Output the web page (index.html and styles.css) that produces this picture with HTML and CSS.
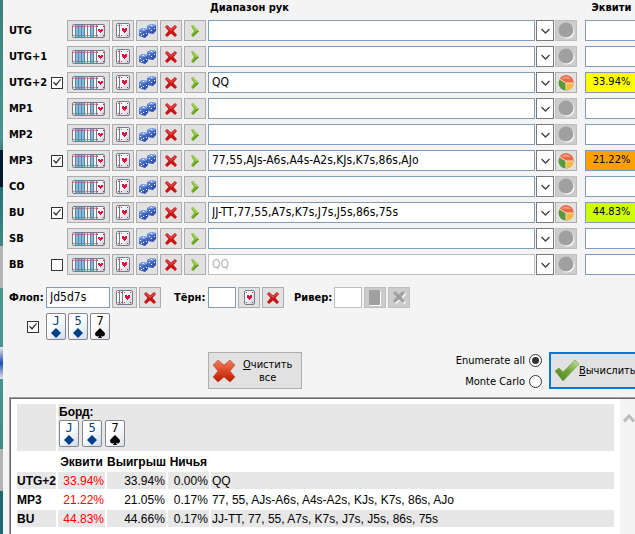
FILE: index.html
```html
<!DOCTYPE html>
<html lang="ru">
<head>
  <meta charset="UTF-8">
  <meta name="viewport" content="width=device-width, initial-scale=1">
  <title>Эквити</title>
  <link rel="stylesheet" href="styles.css">
</head>
<body>

  <!-- icons -->
  <svg class="sprite" aria-hidden="true">
    <defs>
      <linearGradient id="gCard" x1="0" y1="0" x2="1" y2="1"><stop offset=".3" stop-color="#fff"/><stop offset="1" stop-color="#c3cbd6"/></linearGradient>
      <linearGradient id="gRed" x1="0" y1="0" x2="0" y2="1"><stop offset="0" stop-color="#f0805c"/><stop offset=".5" stop-color="#d84a25"/><stop offset="1" stop-color="#b81800"/></linearGradient>
      <linearGradient id="gGreen" x1="1" y1="0" x2="0" y2="1"><stop offset="0" stop-color="#c4e59a"/><stop offset=".5" stop-color="#6fa33a"/><stop offset="1" stop-color="#4e861b"/></linearGradient>
      <linearGradient id="gDice" x1="0" y1="0" x2="1" y2="1"><stop offset="0" stop-color="#6f97ea"/><stop offset="1" stop-color="#1a3a9a"/></linearGradient>

      <symbol id="back" viewBox="0 0 9 14"><rect x=".5" y=".5" width="8" height="13" rx="1.5" fill="#f2f3f6" stroke="#777a88"/><path d="M2 2v1M2 11v1" stroke="#d42a4a"/></symbol>
      <symbol id="blue" viewBox="0 0 9 14"><rect x=".5" y=".5" width="8" height="13" rx="1.5" fill="#72c2ea" stroke="#777a88"/><path d="M2 2v1M2 11v1" stroke="#c02a50"/></symbol>
      <symbol id="heart" viewBox="0 0 9 14"><rect x=".5" y=".5" width="8" height="13" rx="1.5" fill="url(#gCard)" stroke="#777a88"/><path d="M2 5h2v1h1V5h2v2H6v1H5v1H4V8H3V7H2z" fill="#e0103a"/><path d="M1 2h1v1H1zM7 2h1v1H7zM1 11h1v1H1zM7 11h1v1H7z" fill="#d42a4a"/></symbol>
      <symbol id="face" viewBox="0 0 11 15"><rect x=".5" y=".5" width="10" height="14" rx="1.5" fill="url(#gCard)" stroke="#777a88"/><path d="M3 5h2v1h1V5h2v3H7v1H6v1H5V9H4V8H3z" fill="#e0103a"/><path d="M2 2h1v1H2zM8 2h1v1H8zM2 12h1v1H2zM8 12h1v1H8z" fill="#d42a4a"/></symbol>

      <symbol id="i-range" viewBox="0 0 33 14">
        <use href="#back" width="9" height="14"/><use href="#blue" x="3" width="9" height="14"/><use href="#blue" x="6" width="9" height="14"/><use href="#blue" x="9" width="9" height="14"/><use href="#back" x="12" width="9" height="14"/><use href="#back" x="15" width="9" height="14"/><use href="#blue" x="18" width="9" height="14"/><use href="#back" x="21" width="9" height="14"/><use href="#heart" x="24" width="9" height="14"/>
      </symbol>
      <symbol id="i-hand" viewBox="0 0 14 15"><use href="#face" width="11" height="15"/><use href="#face" x="3" width="11" height="15"/></symbol>
      <symbol id="i-flop" viewBox="0 0 17 15"><use href="#face" width="11" height="15"/><use href="#face" x="3" width="11" height="15"/><use href="#face" x="6" width="11" height="15"/></symbol>
      <symbol id="i-card" viewBox="0 0 11 15"><use href="#face" width="11" height="15"/></symbol>
      <symbol id="i-card-off" viewBox="0 0 12 16"><rect x="1" y="1" width="11" height="15" rx="1" fill="#fff"/><rect width="11" height="15" rx="1" fill="#a0a0a0"/></symbol>
      <symbol id="i-dice" viewBox="0 0 17 14">
        <path d="M8 2l4-2 5 1v6l-3 3-6-1z" fill="url(#gDice)"/><path d="M8 2l4-2 5 1-3 2z" fill="#7fa2ea"/>
        <path d="M0 6l3-2 6 1v6l-3 3-6-2z" fill="url(#gDice)"/><path d="M0 6l3-2 6 1-3 2z" fill="#7fa2ea"/>
        <path d="M1 8h1v1H1zM4 10h1v1H4zM2 11h1v1H2zM7 9h1v1H7zM4 5h1v1H4zM10 4h1v1h-1zM12 6h1v1h-1zM15 4h1v1h-1zM12 1h1v1h-1z" fill="#fff"/>
      </symbol>
      <symbol id="i-x" viewBox="0 0 12 12"><path d="M2 0l4 3.500L10 0l2 2-3.500 4L12 10l-2 2-4-3.500L2 12l-2-2 3.500-4L0 2z" fill="#c81414"/><path d="M2 1l4 3.500L10 1l1 1-5 4-5-4z" fill="#e2504e"/></symbol>
      <symbol id="i-x-off" viewBox="0 0 13 13"><path d="M3 1l4 3.500L11 1l2 2-3.500 4L13 11l-2 2-4-3.500L3 13l-2-2 3.500-4L1 3z" fill="#fff"/><path d="M2 0l4 3.500L10 0l2 2-3.500 4L12 10l-2 2-4-3.500L2 12l-2-2 3.500-4L0 2z" fill="#a0a0a0"/></symbol>
      <symbol id="i-next" viewBox="0 0 8 12"><path d="M0 1l2-1 6 6-6 6-2-2 3-4z" fill="#7db829"/><path d="M1 1l1-.5L7 6H5z" fill="#a5d860"/><path d="M1 11l1 .5L8 6H6z" fill="#5c9418"/></symbol>
      <symbol id="i-down" viewBox="0 0 9 6"><path d="M.5 1l4 4 4-4" fill="none" stroke="#444" stroke-width="1.400"/></symbol>
      <symbol id="i-up" viewBox="0 0 12 9"><path d="M1 7.500l5-5.500 5 5.500" fill="none" stroke="#bdbdbd" stroke-width="3"/></symbol>
      <symbol id="i-pie" viewBox="0 0 16 16"><circle cx="8" cy="8" r="7.500" fill="#5a9a3c"/><path d="M8 8L1.500 4A7.500 7.500 0 0 1 15.500 8z" fill="#ee6a45"/><path d="M8 8h7.500A7.500 7.500 0 0 1 8.500 15.500z" fill="#fcb63c"/><path d="M8 15.500V8L1.500 4M8 8h7.500" fill="none" stroke="#fbe3c0"/><path d="M3 4a6.500 6.500 0 0 1 10 0q-5-1-10 0z" fill="#f8a184"/></symbol>
      <symbol id="i-pie-off" viewBox="0 0 17 17"><circle cx="9" cy="9" r="7.500" fill="#fff"/><circle cx="8" cy="8" r="7.500" fill="#a0a0a0"/></symbol>
      <symbol id="i-clear" viewBox="0 0 22 22"><path d="M5 0l6 5 6-5 5 5-5 6 5 6-5 5-6-5-6 5-5-5 5-6-5-6z" fill="url(#gRed)" stroke="#b03a1c" stroke-width=".5"/></symbol>
      <symbol id="i-ok" viewBox="0 0 24 21"><path d="M0 11l4-3 4 4L20 0l4 4L8 21z" fill="url(#gGreen)" stroke="#638f35" stroke-width=".5"/></symbol>
      <symbol id="i-diamond" viewBox="0 0 10 10"><path d="M5 0l5 5-5 5-5-5z" fill="#00408a"/></symbol>
      <symbol id="i-spade" viewBox="0 0 10 10"><path d="M5 0l4 4q2 2 0 4-2 1-3.500-.5L7 10H3l1.500-2.500Q3 9 1 8q-2-2 0-4z" fill="#000"/></symbol>
    </defs>
  </svg>

  <main class="app">
    <section class="players">
      <div class="head">
        <span>Диапазон рук</span>
        <span class="equity-title">Эквити</span>
      </div>
      <div id="rows"></div>
    </section>

    <section class="board">
      <label class="name" for="flop">Флоп:</label>
      <input class="field flop" id="flop" type="text" value="Jd5d7s">
      <button class="btn flop-btn" aria-label="Выбрать флоп"><svg width="17" height="15"><use href="#i-flop"/></svg></button>
      <button class="btn" aria-label="Очистить флоп"><svg width="12" height="12"><use href="#i-x"/></svg></button>
      <label class="name turn-name" for="turn">Тёрн:</label>
      <input class="field street" id="turn" type="text">
      <button class="btn" aria-label="Выбрать тёрн"><svg width="11" height="15"><use href="#i-card"/></svg></button>
      <button class="btn" aria-label="Очистить тёрн"><svg width="12" height="12"><use href="#i-x"/></svg></button>
      <label class="name river-name" for="river">Ривер:</label>
      <input class="field street" id="river" type="text" disabled>
      <button class="btn" disabled aria-label="Выбрать ривер"><svg width="12" height="16"><use href="#i-card-off"/></svg></button>
      <button class="btn" disabled aria-label="Очистить ривер"><svg width="13" height="13"><use href="#i-x-off"/></svg></button>
    </section>

    <section class="board-cards">
      <input class="check" type="checkbox" checked aria-label="Борд">
      <div class="cards">
        <span class="card blue">J<svg width="10" height="10"><use href="#i-diamond"/></svg></span>
        <span class="card blue">5<svg width="10" height="10"><use href="#i-diamond"/></svg></span>
        <span class="card">7<svg width="10" height="10"><use href="#i-spade"/></svg></span>
      </div>
    </section>

    <section class="actions">
      <button class="big-btn clear"><svg width="22" height="22"><use href="#i-clear"/></svg><span><u>О</u>чистить<br>все</span></button>
      <div class="modes">
        <label>Enumerate all <input class="radio" type="radio" name="mode" checked></label>
        <label>Monte Carlo <input class="radio" type="radio" name="mode"></label>
      </div>
      <button class="big-btn calc"><svg width="24" height="21"><use href="#i-ok"/></svg><span><u>В</u>ычислить</span></button>
    </section>

    <section class="results">
      <table>
        <tr class="odd top">
          <td></td>
          <td colspan="4">
            <b>Борд:</b>
            <div class="cards wide">
              <span class="card blue">J<svg width="10" height="10"><use href="#i-diamond"/></svg></span>
              <span class="card blue">5<svg width="10" height="10"><use href="#i-diamond"/></svg></span>
              <span class="card">7<svg width="10" height="10"><use href="#i-spade"/></svg></span>
            </div>
          </td>
        </tr>
        <tr><td class="c-name"></td><th class="c-eq">Эквити</th><th class="c-win">Выигрыш</th><th class="c-tie">Ничья</th><td></td></tr>
        <tr class="odd"><th>UTG+2</th><td class="num red">33.94%</td><td class="num">33.94%</td><td class="num">0.00%</td><td>QQ</td></tr>
        <tr><th>MP3</th><td class="num red">21.22%</td><td class="num">21.05%</td><td class="num">0.17%</td><td>77, 55, AJs-A6s, A4s-A2s, KJs, K7s, 86s, AJo</td></tr>
        <tr class="odd"><th>BU</th><td class="num red">44.83%</td><td class="num">44.66%</td><td class="num">0.17%</td><td>JJ-TT, 77, 55, A7s, K7s, J7s, J5s, 86s, 75s</td></tr>
      </table>
      <div class="scroll"><svg width="12" height="9"><use href="#i-up"/></svg></div>
    </section>
  </main>

  <script src="script.js"></script>
</body>
</html>
```

FILE: styles.css
```css
* {
  box-sizing: border-box;
}

body {
  margin: 0;
  padding-left: 3px;
  height: 100vh;
  overflow: hidden;
  background: linear-gradient(#3c7f7c, #4a948c 26%, #3c7f7c 28%, #04182c 28%, #04182c 35%, #2a6f78 35%, #3f8a82 46%, #b4b4b4 46%, #b4b4b4 54%, #4a948c 54%, #4a948c 65%, #e8e8e8 65%, #1c50b0 68%, #e8e8e8 71%, #4a948c 71%, #3f8a82 84%, #b4b4b4 84%, #b4b4b4 92%, #1f6670 92%);
  font-family: "DejaVu Sans Condensed", "DejaVu Sans", sans-serif;
  font-size: 11px;
  color: #000;
}

button,
input {
  font-family: inherit;
  font-size: 11px;
  color: #000;
  margin: 0;
  padding: 0;
}

svg {
  display: block;
  flex: none;
}

.sprite {
  position: absolute;
  width: 0;
  height: 0;
}

/* the window is a little wider than the screen */
.app {
  width: calc(100% + 3px);
  min-height: 100vh;
  display: flex;
  flex-direction: column;
  background: #f4f4f4;
  padding-left: 6px;
}

/* players */
.head {
  display: flex;
  justify-content: space-between;
  height: 20px;
  padding-left: 201px;
  font-weight: bold;
  line-height: 16px;
}

.equity-title {
  width: 53px;
  text-align: center;
}

.row {
  display: grid;
  grid-template-columns: 40px 14px 43px 22px 22px 22px 22px 1fr 46px 53px;
  column-gap: 2px;
  height: 21px;
  margin-bottom: 5px;
  align-items: center;
}

.name {
  font-weight: bold;
  white-space: nowrap;
}

.btn {
  width: 22px;
  height: 21px;
  display: flex;
  align-items: center;
  justify-content: center;
  border: 1px solid #adadad;
  background: #e1e1e1;
}

.btn:disabled {
  border-color: #bfbfbf;
  background: #ccc;
}

.btn.range-btn {
  width: 43px;
}

.btn.flop-btn {
  width: 25px;
}

.btn.drop {
  width: 18px;
  border-color: #7a7a7a;
  background: #fff;
}

.drop-pie {
  display: flex;
  gap: 1px;
  margin-left: -1px;
}

.field {
  height: 21px;
  width: 100%;
  padding: 0 3px 2px;
  border: 1px solid #7f9db9;
  background: #fff;
  font-size: 12px;
}

.field:disabled {
  border-color: #bfbfbf;
  color: #b4b4b4;
}

.field.equity {
  padding: 0 0 2px;
  font-size: 11px;
  text-align: center;
}

.yellow { background: #ff0; }
.orange { background: #ffa000; }
.lime { background: #d0ff00; }

.check,
.radio {
  appearance: none;
  display: grid;
  place-items: center;
  width: 12px;
  height: 12px;
  border: 1px solid #333;
  background: #fff;
}

.check:checked::after {
  content: "";
  width: 8px;
  height: 7px;
  background: #333;
  clip-path: polygon(0 50%, 12% 38%, 38% 68%, 90% 0, 100% 12%, 38% 100%);
}

.radio {
  width: 13px;
  height: 13px;
  border-radius: 50%;
}

.radio:checked::after {
  content: "";
  width: 7px;
  height: 7px;
  border-radius: 50%;
  background: #333;
}

/* board */
.board {
  display: flex;
  align-items: center;
  gap: 2px;
  margin-top: 7px;
}

.board .name {
  width: 35px;
}

.board .turn-name {
  margin-left: 11px;
  width: 32px;
}

.board .river-name {
  margin-left: 8px;
  width: 38px;
}

.field.flop {
  width: 64px;
}

.field.street {
  width: 28px;
}

.board-cards {
  display: flex;
  align-items: center;
  gap: 7px;
  margin-top: 5px;
  padding-left: 18px;
}

.cards {
  display: flex;
  gap: 2px;
}

.cards.wide {
  gap: 3px;
}

.card {
  width: 20px;
  height: 27px;
  display: flex;
  flex-direction: column;
  align-items: center;
  border: 1px solid #85858f;
  border-radius: 2px;
  background: linear-gradient(135deg, #fff 40%, #dde1e6);
  font: 12px/14px "DejaVu Sans Mono", monospace;
}

.card.blue {
  color: #00408a;
  background: linear-gradient(135deg, #fff 40%, #ccdbe8);
}

/* actions */
.actions {
  display: flex;
  align-items: center;
  margin-top: 12px;
  padding-left: 199px;
}

.big-btn {
  height: 37px;
  display: flex;
  align-items: center;
  border: 1px solid #adadad;
  background: #e1e1e1;
  line-height: 13px;
}

.big-btn span {
  white-space: nowrap;
}

.clear {
  width: 94px;
  padding: 0 4px;
  gap: 8px;
}

.calc {
  width: 89px;
  padding: 0 4px;
  gap: 0;
  border: 2px solid #0078d7;
}

.modes {
  flex: 1;
  display: flex;
  flex-direction: column;
  align-items: flex-end;
  gap: 5px;
  padding-right: 7px;
}

.modes label {
  display: flex;
  align-items: center;
  gap: 4px;
  height: 16px;
}

/* results */
.results {
  flex: 1;
  display: flex;
  align-items: stretch;
  margin-top: 8px;
  border: 1px solid #a0a0a0;
  border-bottom: 0;
  box-shadow: inset 1px 1px #696969;
  background: #fff;
  padding: 1px 0 0 1px;
  font-family: "Liberation Sans", Arial, sans-serif;
  font-size: 12px;
}

.results table {
  flex: 1;
  align-self: flex-start;
  margin: 3px 4px;
  border-spacing: 2px;
  line-height: 15px;
}

.results td,
.results th {
  height: 17px;
  padding: 2px 1px 0;
  text-align: left;
  white-space: nowrap;
}

.results th {
  padding: 2px 0 0;
}

.odd td,
.odd th {
  background: #e7e7e7;
}

.results .top td {
  height: 47px;
  padding: 1px;
  vertical-align: top;
}

.results th.c-eq,
.results th.c-win,
.results th.c-tie {
  text-align: center;
}

.c-name { width: 39px; }
.c-eq { width: 47px; }
.c-win { width: 57px; }
.c-tie { width: 41px; }

.results .num {
  text-align: right;
}

.red {
  color: #f00;
}

.scroll {
  width: 17px;
  padding: 15px 0 0 3px;
  background: #f4f4f4;
}
```

FILE: script.js
```js
const players = [
  { name: "UTG" },
  { name: "UTG+1" },
  { name: "UTG+2", check: true, on: true, range: "QQ", equity: "33.94%", color: "yellow" },
  { name: "MP1" },
  { name: "MP2" },
  { name: "MP3", check: true, on: true, range: "77,55,AJs-A6s,A4s-A2s,KJs,K7s,86s,AJo", equity: "21.22%", color: "orange" },
  { name: "CO" },
  { name: "BU", check: true, on: true, range: "JJ-TT,77,55,A7s,K7s,J7s,J5s,86s,75s", equity: "44.83%", color: "lime" },
  { name: "SB" },
  { name: "BB", check: true, range: "QQ", off: true }
];

function icon(id, w, h) {
  return `<svg width="${w}" height="${h}"><use href="#${id}"/></svg>`;
}

document.getElementById("rows").innerHTML = players.map((p, i) => `
  <div class="row">
    <label class="name" for="range${i}">${p.name}</label>
    ${p.check ? `<input class="check" type="checkbox" aria-label="${p.name}" ${p.on ? "checked" : ""}>` : "<span></span>"}
    <button class="btn range-btn" aria-label="Диапазон">${icon("i-range", 33, 14)}</button>
    <button class="btn" aria-label="Рука">${icon("i-hand", 14, 15)}</button>
    <button class="btn" aria-label="Случайно">${icon("i-dice", 17, 14)}</button>
    <button class="btn" aria-label="Очистить">${icon("i-x", 12, 12)}</button>
    <button class="btn" aria-label="Далее">${icon("i-next", 8, 12)}</button>
    <input class="field" id="range${i}" type="text" value="${p.range || ""}" ${p.off ? "disabled" : ""}>
    <div class="drop-pie">
      <button class="btn drop" aria-label="Список">${icon("i-down", 9, 6)}</button>
      <button class="btn" aria-label="Диаграмма" ${p.equity ? "" : "disabled"}>${p.equity ? icon("i-pie", 16, 16) : icon("i-pie-off", 17, 17)}</button>
    </div>
    <input class="field equity ${p.color || ""}" type="text" aria-label="Эквити ${p.name}" value="${p.equity || ""}" readonly>
  </div>`).join("");
```
